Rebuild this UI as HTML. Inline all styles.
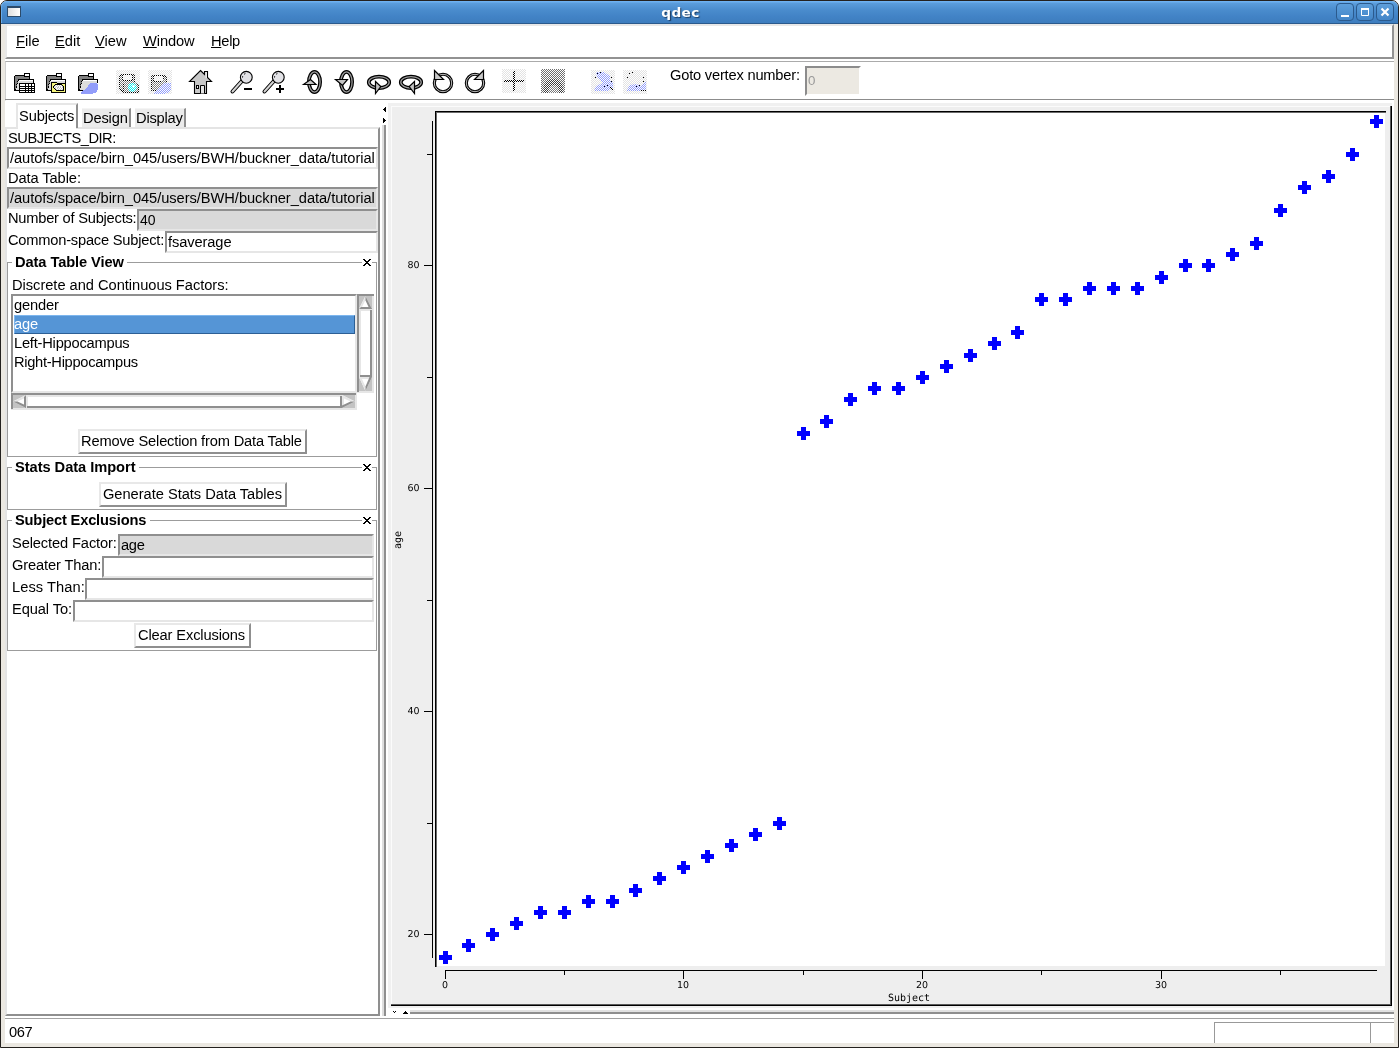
<!DOCTYPE html>
<html><head><meta charset="utf-8"><title>qdec</title>
<style>
*{box-sizing:border-box;margin:0;padding:0}
html,body{width:1399px;height:1048px;overflow:hidden}
body{will-change:transform;position:relative;background:#fff;font-family:"Liberation Sans",sans-serif;font-size:14.67px;color:#000;line-height:17px}
.a{position:absolute}
.t{position:absolute;white-space:nowrap;line-height:17px;height:17px;margin-top:1px}
u{text-decoration:underline;text-underline-offset:1px;text-decoration-thickness:1px}
/* window frame */
#frame{left:0;top:0;width:1399px;height:1048px;border:1px solid #24211e;border-radius:7px 7px 0 0;background:#ebe8e1}
#title{left:1px;top:1px;width:1397px;height:23px;border-radius:6px 6px 0 0;background:linear-gradient(#6eb1f0 0,#6eb1f0 1px,#5b9ddc 2px,#4a8ccd 40%,#4283c6 70%,#3d7dbe 100%);border-bottom:1px solid #2b5a8c;box-shadow:inset 1px 0 0 #68abea}
#title .cap{left:0;top:3px;width:1359px;transform:scaleX(1.14);text-align:center;color:#fff;font-family:'DejaVu Sans',sans-serif;font-weight:bold;font-size:12px;letter-spacing:.3px;line-height:17px;text-shadow:1px 1px 1px #1d3d63}
.wb{top:2px;width:18px;height:18px;border:1px solid #2b5a8d;border-radius:4px;background:linear-gradient(#5d9edb,#4486c8)}
#wmenu{left:6px;top:5px;width:14px;height:11px;border:1px solid #2c4b6b;border-top:2px solid #2c4b6b;background:linear-gradient(90deg,#dedede,#fff)}
#content{left:5px;top:24px;width:1389px;height:1019px;background:#fff}
/* menubar */
#menubar{left:5px;top:24px;width:1389px;height:35px;background:#fff;border-top:2px solid #e8e8e8;border-left:2px solid #e8e8e8;border-right:2px solid #929292;border-bottom:2px solid #929292}
#toolbar{left:5px;top:61px;width:1389px;height:40px;background:#fff;border-top:1px solid #ababab;border-left:1px solid #d0d0d0;border-bottom:1px solid #fff}
#tbline{left:5px;top:99px;width:1389px;height:1px;background:#8c8c8c}
.ic{position:absolute;top:70px;width:24px;height:24px}
/* entry */
.entry{position:absolute;height:22px;border:2px solid;border-color:#8f8f8f #e6e6e6 #e6e6e6 #8f8f8f;background:#fff}
.entry.ro{background:#d9d9d9}
/* notebook */
#nb{left:5px;top:127px;width:375px;height:889px;border:2px solid;border-color:#e4e4e4 #8f8f8f #8f8f8f #e4e4e4;background:#fff}
.tab{position:absolute;background:#ebebeb;border-right:2px solid #8f8f8f;border-top:1px solid #f4f4f4}
#tab1{left:16px;top:103px;width:62px;height:25px;background:#fff;border-left:2px solid #e6e6e6;border-top:2px solid #e6e6e6;border-right:2px solid #8f8f8f}
/* label frames */
.lf{position:absolute;left:7px;width:370px;border:1px solid #9c9c9c;border-top:none}
.lfline{position:absolute;height:1px;background:#9c9c9c}
.lft{font-weight:bold}
.btn{position:absolute;height:25px;border:2px solid;border-color:#e8e8e8 #8f8f8f #8f8f8f #e8e8e8;background:#fff;text-align:center;line-height:19px;white-space:nowrap}
.sb{position:absolute;background:#fff}

</style></head>
<body>
<div id="frame" class="a"></div>
<div id="title" class="a">
  <div id="wmenu" class="a"></div>
  <div class="t cap" id="cap">qdec</div>
  <div class="a wb" style="left:1335px"><svg width="16" height="16" viewBox="0 0 16 16" class="a" style="left:0;top:0"><rect x="4" y="11" width="8" height="2" fill="#fff"/></svg></div>
  <div class="a wb" style="left:1355px"><svg width="16" height="16" viewBox="0 0 16 16" class="a" style="left:0;top:0"><path d="M4.5 5.5h7v6h-7z" fill="none" stroke="#fff" stroke-width="1"/><rect x="4" y="4" width="8" height="2" fill="#fff"/></svg></div>
  <div class="a wb" style="left:1375px"><svg width="16" height="16" viewBox="0 0 16 16" class="a" style="left:0;top:0"><path d="M4.5 4.5l7 7M11.5 4.5l-7 7" stroke="#fff" stroke-width="2.2" fill="none"/></svg></div>
</div>
<div id="content" class="a"></div>

<!-- menubar -->
<div id="menubar" class="a"></div>
<div class="t" id="m1" style="left:16px;top:32px"><u>F</u>ile</div>
<div class="t" id="m2" style="left:55px;top:32px"><u>E</u>dit</div>
<div class="t" id="m3" style="left:95px;top:32px"><u>V</u>iew</div>
<div class="t" id="m4" style="letter-spacing:-0.1px;left:143px;top:32px"><u>W</u>indow</div>
<div class="t" id="m5" style="letter-spacing:-0.3px;left:211px;top:32px"><u>H</u>elp</div>

<!-- toolbar -->
<div id="toolbar" class="a"></div>
<div id="tbline" class="a"></div>
<svg class="a" id="icons" style="left:0;top:62px" width="700" height="38" viewBox="0 62 700 38">
<defs>
  <pattern id="chk" width="2" height="2" patternUnits="userSpaceOnUse"><rect x="0" y="0" width="1" height="1" fill="#fff"/><rect x="1" y="1" width="1" height="1" fill="#fff"/></pattern>
  <g id="folder" shape-rendering="crispEdges"><rect x="10" y="0" width="6" height="1" fill="#000"/><rect x="10" y="1" width="1" height="1" fill="#000"/><rect x="11" y="1" width="4" height="1" fill="#fff"/><rect x="15" y="1" width="1" height="1" fill="#000"/><rect x="1" y="2" width="10" height="1" fill="#000"/><rect x="11" y="2" width="4" height="1" fill="#fff"/><rect x="15" y="2" width="1" height="1" fill="#000"/><rect x="0" y="3" width="1" height="1" fill="#000"/><rect x="1" y="3" width="9" height="1" fill="#808080"/><rect x="10" y="3" width="6" height="1" fill="#000"/><rect x="0" y="4" width="1" height="1" fill="#000"/><rect x="1" y="4" width="14" height="1" fill="#808080"/><rect x="15" y="4" width="1" height="1" fill="#000"/><rect x="0" y="5" width="1" height="1" fill="#000"/><rect x="1" y="5" width="14" height="1" fill="#808080"/><rect x="15" y="5" width="1" height="1" fill="#000"/><rect x="0" y="6" width="1" height="1" fill="#000"/><rect x="1" y="6" width="3" height="1" fill="#808080"/><rect x="4" y="6" width="16" height="1" fill="#000"/><rect x="0" y="7" width="1" height="1" fill="#000"/><rect x="1" y="7" width="3" height="1" fill="#808080"/><rect x="4" y="7" width="1" height="1" fill="#000"/><rect x="5" y="7" width="14" height="1" fill="#fff"/><rect x="19" y="7" width="1" height="1" fill="#000"/><rect x="0" y="8" width="1" height="1" fill="#000"/><rect x="1" y="8" width="2" height="1" fill="#808080"/><rect x="3" y="8" width="1" height="1" fill="#000"/><rect x="4" y="8" width="15" height="1" fill="#dcdcdc"/><rect x="19" y="8" width="1" height="1" fill="#000"/><rect x="0" y="9" width="1" height="1" fill="#000"/><rect x="1" y="9" width="3" height="1" fill="#808080"/><rect x="4" y="9" width="15" height="1" fill="#dcdcdc"/><rect x="19" y="9" width="1" height="1" fill="#000"/><rect x="0" y="10" width="1" height="1" fill="#000"/><rect x="1" y="10" width="2" height="1" fill="#808080"/><rect x="3" y="10" width="1" height="1" fill="#000"/><rect x="4" y="10" width="14" height="1" fill="#dcdcdc"/><rect x="18" y="10" width="1" height="1" fill="#000"/><rect x="0" y="11" width="1" height="1" fill="#000"/><rect x="1" y="11" width="1" height="1" fill="#808080"/><rect x="2" y="11" width="1" height="1" fill="#000"/><rect x="3" y="11" width="15" height="1" fill="#dcdcdc"/><rect x="18" y="11" width="1" height="1" fill="#000"/><rect x="0" y="12" width="1" height="1" fill="#000"/><rect x="1" y="12" width="2" height="1" fill="#808080"/><rect x="3" y="12" width="15" height="1" fill="#dcdcdc"/><rect x="0" y="13" width="1" height="1" fill="#000"/><rect x="1" y="13" width="1" height="1" fill="#808080"/><rect x="2" y="13" width="1" height="1" fill="#000"/><rect x="3" y="13" width="14" height="1" fill="#dcdcdc"/><rect x="17" y="13" width="1" height="1" fill="#000"/><rect x="0" y="14" width="1" height="1" fill="#000"/><rect x="1" y="14" width="1" height="1" fill="#808080"/><rect x="2" y="14" width="1" height="1" fill="#000"/><rect x="3" y="14" width="14" height="1" fill="#dcdcdc"/><rect x="17" y="14" width="1" height="1" fill="#000"/><rect x="0" y="15" width="1" height="1" fill="#000"/><rect x="1" y="15" width="1" height="1" fill="#808080"/><rect x="2" y="15" width="15" height="1" fill="#dcdcdc"/><rect x="0" y="16" width="2" height="1" fill="#000"/><rect x="2" y="16" width="15" height="1" fill="#dcdcdc"/><rect x="17" y="16" width="1" height="1" fill="#000"/><rect x="0" y="17" width="18" height="1" fill="#000"/></g>
</defs>
<!-- 1: folder + table -->
<g transform="translate(14,73)"><use href="#folder"/>
  <g shape-rendering="crispEdges"><rect x="5" y="10" width="16" height="10" fill="#000"/>
  <g fill="#fff"><rect x="6" y="11" width="5" height="2"/><rect x="12" y="11" width="2" height="2"/><rect x="15" y="11" width="2" height="2"/><rect x="18" y="11" width="2" height="2"/>
  <rect x="6" y="14" width="5" height="1"/><rect x="12" y="14" width="2" height="1"/><rect x="15" y="14" width="2" height="1"/><rect x="18" y="14" width="2" height="1"/>
  <rect x="6" y="16" width="5" height="1"/><rect x="12" y="16" width="2" height="1"/><rect x="15" y="16" width="2" height="1"/><rect x="18" y="16" width="2" height="1"/>
  <rect x="6" y="18" width="5" height="1"/><rect x="12" y="18" width="2" height="1"/><rect x="15" y="18" width="2" height="1"/><rect x="18" y="18" width="2" height="1"/></g></g>
</g>
<!-- 2: folder + yellow folder -->
<g transform="translate(46,73)" shape-rendering="crispEdges"><use href="#folder"/><rect x="5" y="9" width="6" height="1" fill="#000"/><rect x="5" y="10" width="1" height="1" fill="#000"/><rect x="6" y="10" width="5" height="1" fill="#f4f47c"/><rect x="11" y="10" width="9" height="1" fill="#000"/><rect x="5" y="11" width="1" height="1" fill="#000"/><rect x="6" y="11" width="3" height="1" fill="#f4f47c"/><rect x="9" y="11" width="7" height="1" fill="#000"/><rect x="16" y="11" width="3" height="1" fill="#f4f47c"/><rect x="19" y="11" width="1" height="1" fill="#000"/><rect x="5" y="12" width="1" height="1" fill="#000"/><rect x="6" y="12" width="2" height="1" fill="#f4f47c"/><rect x="8" y="12" width="1" height="1" fill="#000"/><rect x="9" y="12" width="1" height="1" fill="#c8c8c8"/><rect x="10" y="12" width="1" height="1" fill="#fff"/><rect x="11" y="12" width="1" height="1" fill="#c8c8c8"/><rect x="12" y="12" width="1" height="1" fill="#fff"/><rect x="13" y="12" width="1" height="1" fill="#c8c8c8"/><rect x="14" y="12" width="1" height="1" fill="#fff"/><rect x="15" y="12" width="1" height="1" fill="#c8c8c8"/><rect x="16" y="12" width="1" height="1" fill="#000"/><rect x="17" y="12" width="2" height="1" fill="#f4f47c"/><rect x="19" y="12" width="1" height="1" fill="#000"/><rect x="5" y="13" width="1" height="1" fill="#000"/><rect x="6" y="13" width="1" height="1" fill="#f4f47c"/><rect x="7" y="13" width="1" height="1" fill="#000"/><rect x="8" y="13" width="1" height="1" fill="#c8c8c8"/><rect x="9" y="13" width="1" height="1" fill="#fff"/><rect x="10" y="13" width="1" height="1" fill="#c8c8c8"/><rect x="11" y="13" width="1" height="1" fill="#fff"/><rect x="12" y="13" width="1" height="1" fill="#c8c8c8"/><rect x="13" y="13" width="1" height="1" fill="#fff"/><rect x="14" y="13" width="1" height="1" fill="#c8c8c8"/><rect x="15" y="13" width="1" height="1" fill="#fff"/><rect x="16" y="13" width="1" height="1" fill="#c8c8c8"/><rect x="17" y="13" width="1" height="1" fill="#000"/><rect x="18" y="13" width="1" height="1" fill="#f4f47c"/><rect x="19" y="13" width="1" height="1" fill="#000"/><rect x="5" y="14" width="1" height="1" fill="#000"/><rect x="6" y="14" width="1" height="1" fill="#f4f47c"/><rect x="7" y="14" width="1" height="1" fill="#000"/><rect x="8" y="14" width="1" height="1" fill="#fff"/><rect x="9" y="14" width="1" height="1" fill="#c8c8c8"/><rect x="10" y="14" width="1" height="1" fill="#fff"/><rect x="11" y="14" width="2" height="1" fill="#c8c8c8"/><rect x="13" y="14" width="1" height="1" fill="#fff"/><rect x="14" y="14" width="1" height="1" fill="#c8c8c8"/><rect x="15" y="14" width="1" height="1" fill="#fff"/><rect x="16" y="14" width="1" height="1" fill="#c8c8c8"/><rect x="17" y="14" width="1" height="1" fill="#000"/><rect x="18" y="14" width="1" height="1" fill="#f4f47c"/><rect x="19" y="14" width="1" height="1" fill="#000"/><rect x="5" y="15" width="1" height="1" fill="#000"/><rect x="6" y="15" width="2" height="1" fill="#f4f47c"/><rect x="8" y="15" width="1" height="1" fill="#000"/><rect x="9" y="15" width="1" height="1" fill="#c8c8c8"/><rect x="10" y="15" width="1" height="1" fill="#fff"/><rect x="11" y="15" width="1" height="1" fill="#c8c8c8"/><rect x="12" y="15" width="1" height="1" fill="#fff"/><rect x="13" y="15" width="1" height="1" fill="#c8c8c8"/><rect x="14" y="15" width="1" height="1" fill="#fff"/><rect x="15" y="15" width="1" height="1" fill="#c8c8c8"/><rect x="16" y="15" width="1" height="1" fill="#fff"/><rect x="17" y="15" width="1" height="1" fill="#000"/><rect x="18" y="15" width="1" height="1" fill="#f4f47c"/><rect x="19" y="15" width="1" height="1" fill="#000"/><rect x="5" y="16" width="1" height="1" fill="#000"/><rect x="6" y="16" width="3" height="1" fill="#f4f47c"/><rect x="9" y="16" width="1" height="1" fill="#000"/><rect x="10" y="16" width="1" height="1" fill="#c8c8c8"/><rect x="11" y="16" width="1" height="1" fill="#fff"/><rect x="12" y="16" width="1" height="1" fill="#c8c8c8"/><rect x="13" y="16" width="1" height="1" fill="#fff"/><rect x="14" y="16" width="1" height="1" fill="#c8c8c8"/><rect x="15" y="16" width="1" height="1" fill="#fff"/><rect x="16" y="16" width="1" height="1" fill="#c8c8c8"/><rect x="17" y="16" width="1" height="1" fill="#000"/><rect x="18" y="16" width="1" height="1" fill="#f4f47c"/><rect x="19" y="16" width="1" height="1" fill="#000"/><rect x="5" y="17" width="1" height="1" fill="#000"/><rect x="6" y="17" width="4" height="1" fill="#f4f47c"/><rect x="10" y="17" width="8" height="1" fill="#000"/><rect x="18" y="17" width="1" height="1" fill="#f4f47c"/><rect x="19" y="17" width="1" height="1" fill="#000"/><rect x="5" y="18" width="1" height="1" fill="#000"/><rect x="6" y="18" width="13" height="1" fill="#f4f47c"/><rect x="19" y="18" width="1" height="1" fill="#000"/><rect x="5" y="19" width="15" height="1" fill="#000"/></g>
<!-- 3: folder + blob -->
<g transform="translate(78,73)" shape-rendering="crispEdges"><use href="#folder"/><rect x="12" y="10" width="7" height="1" fill="#929dfa"/><rect x="11" y="11" width="9" height="1" fill="#929dfa"/><rect x="10" y="12" width="10" height="1" fill="#929dfa"/><rect x="10" y="13" width="10" height="1" fill="#929dfa"/><rect x="9" y="14" width="11" height="1" fill="#929dfa"/><rect x="8" y="15" width="12" height="1" fill="#929dfa"/><rect x="7" y="16" width="13" height="1" fill="#929dfa"/><rect x="5" y="17" width="14" height="1" fill="#929dfa"/><rect x="4" y="18" width="15" height="1" fill="#929dfa"/><rect x="3" y="19" width="15" height="1" fill="#929dfa"/><rect x="3" y="20" width="12" height="1" fill="#929dfa"/></g>
<!-- 4: disabled save + ball -->
<g>
  <rect x="116" y="70" width="24" height="24" fill="#e2e2e2"/>
  <path d="M121.500 74.500H133.500L134.500 75.500V82.500L138.500 85.500V92.500H123.500L119.500 88.500V76.500Z" fill="#808080" stroke="#000" stroke-width="1"/>
  <path d="M123.500 83.500V91.500" stroke="#000" stroke-width="1"/>
  <rect x="122.500" y="74.500" width="10" height="6" fill="#ececec" stroke="#000" stroke-width="1"/>
  <circle cx="132.300" cy="87.300" r="4.400" fill="#00f2f2"/><circle cx="133.500" cy="86.300" r="1.300" fill="#fff"/>
  <rect x="116" y="70" width="24" height="24" fill="url(#chk)" shape-rendering="crispEdges"/>
</g>
<!-- 5: disabled save + blob -->
<g>
  <rect x="148" y="70" width="24" height="24" fill="#e2e2e2"/>
  <path d="M152.500 75.500H164.500L166.500 77.500V84.500L156.500 90.500H151.500V76.500Z" fill="#808080" stroke="#000" stroke-width="1"/>
  <path d="M153.500 75.500H163.500V79.500L161.500 81.500H153.500Z" fill="#ececec" stroke="#000" stroke-width="1"/>
  <g transform="translate(151,73)" shape-rendering="crispEdges"><rect x="12" y="10" width="7" height="1" fill="#929dfa"/><rect x="11" y="11" width="9" height="1" fill="#929dfa"/><rect x="10" y="12" width="10" height="1" fill="#929dfa"/><rect x="10" y="13" width="10" height="1" fill="#929dfa"/><rect x="9" y="14" width="11" height="1" fill="#929dfa"/><rect x="8" y="15" width="12" height="1" fill="#929dfa"/><rect x="7" y="16" width="13" height="1" fill="#929dfa"/><rect x="5" y="17" width="14" height="1" fill="#929dfa"/><rect x="4" y="18" width="15" height="1" fill="#929dfa"/><rect x="3" y="19" width="15" height="1" fill="#929dfa"/><rect x="3" y="20" width="12" height="1" fill="#929dfa"/></g>
  <rect x="168" y="83" width="3" height="8" fill="#929dfa"/>
  <rect x="148" y="70" width="24" height="24" fill="url(#chk)" shape-rendering="crispEdges"/>
</g>
<!-- 6: home -->
<g>
  <path d="M200.500 70.500L204.500 74.500V71.500H207.500V77.500L211.500 81.500H206.500V93.500H194.500V81.500H189.500Z" fill="#c8c8c8" stroke="#000" stroke-width="1.100" stroke-linejoin="miter"/>
  <rect x="205.500" y="72" width="1.500" height="6" fill="#e4e4e4"/>
  <rect x="196.500" y="85.500" width="2" height="3" fill="#e4e4e4" stroke="#000" stroke-width="1"/>
  <path d="M200.500 93.500v-8h4v8" fill="#e4e4e4" stroke="#000" stroke-width="1"/>
</g>
<!-- 7: zoom out -->
<g id="mag">
  <path d="M241.500 81.500L232.500 91.500" stroke="#000" stroke-width="4" stroke-linecap="round"/>
  <path d="M241.500 81.500L232.500 91.500" stroke="#d4d4d4" stroke-width="2" stroke-linecap="round"/>
  <circle cx="246.300" cy="77.300" r="5.900" fill="#e2e2e6" stroke="#000" stroke-width="1.100"/>
  <path d="M242.500 77.500a4 4 0 0 1 3.500-4" stroke="#000" stroke-width="1" fill="none" stroke-dasharray="1.500 2"/>
</g>
<rect x="244" y="88" width="8" height="2" fill="#000" shape-rendering="crispEdges"/>
<!-- 8: zoom in -->
<use href="#mag" x="32"/>
<rect x="276" y="88" width="8" height="2" fill="#000" shape-rendering="crispEdges"/><rect x="279" y="85" width="2" height="8" fill="#000" shape-rendering="crispEdges"/>
<!-- 9,10: rotate about vertical ring -->
<g>
  <ellipse cx="314.500" cy="82" rx="5.600" ry="10.100" fill="none" stroke="#000" stroke-width="3.800"/>
  <ellipse cx="314.500" cy="82" rx="5.600" ry="10.100" fill="none" stroke="#9a9a9a" stroke-width="1.300"/>
  <path d="M303.500 84.500L310.500 79.500L316 84.500Z" fill="#c4c4c4" stroke="#000" stroke-width="1.200"/>
</g>
<g>
  <ellipse cx="346.500" cy="82" rx="5.600" ry="10.100" fill="none" stroke="#000" stroke-width="3.800"/>
  <ellipse cx="346.500" cy="82" rx="5.600" ry="10.100" fill="none" stroke="#9a9a9a" stroke-width="1.300"/>
  <path d="M335.500 79.500L347.500 79.500L342.500 85.500Z" fill="#c4c4c4" stroke="#000" stroke-width="1.200"/>
</g>
<!-- 11,12: horizontal ring -->
<g>
  <ellipse cx="379" cy="82.300" rx="10.200" ry="5.700" fill="none" stroke="#000" stroke-width="3.800"/>
  <ellipse cx="379" cy="82.300" rx="10.200" ry="5.700" fill="none" stroke="#9a9a9a" stroke-width="1.300"/>
  <path d="M375.500 81.500L380.800 86.600L375.500 93.500Z" fill="#c4c4c4" stroke="#000" stroke-width="1.200"/>
</g>
<g>
  <ellipse cx="411" cy="82.300" rx="10.200" ry="5.700" fill="none" stroke="#000" stroke-width="3.800"/>
  <ellipse cx="411" cy="82.300" rx="10.200" ry="5.700" fill="none" stroke="#9a9a9a" stroke-width="1.300"/>
  <path d="M414.500 81.500L409.200 86.600L414.500 93.500Z" fill="#c4c4c4" stroke="#000" stroke-width="1.200"/>
</g>
<!-- 13,14: circles -->
<g>
  <circle cx="443" cy="83" r="8.700" fill="none" stroke="#000" stroke-width="3.100"/>
  <circle cx="443" cy="83" r="8.700" fill="none" stroke="#cfcfcf" stroke-width=".900"/>
  <path d="M434.500 70.500V79.500H443.500Z" fill="#c8c8c8" stroke="#000" stroke-width="1.200"/>
</g>
<g>
  <circle cx="475" cy="83" r="8.700" fill="none" stroke="#000" stroke-width="3.100"/>
  <circle cx="475" cy="83" r="8.700" fill="none" stroke="#cfcfcf" stroke-width=".900"/>
  <path d="M483.500 70.500V79.500H474.500Z" fill="#c8c8c8" stroke="#000" stroke-width="1.200"/>
</g>
<!-- 15: crosshair disabled -->
<g shape-rendering="crispEdges">
  <rect x="502" y="69" width="24" height="24" fill="#e2e2e2"/>
  <rect x="504" y="80" width="20" height="2" fill="#000"/><rect x="513" y="71" width="2" height="20" fill="#000"/>
  <rect x="502" y="69" width="24" height="24" fill="url(#chk)"/>
</g>
<!-- 16: gray disabled -->
<g>
  <rect x="541" y="69" width="24" height="24" fill="#6e6e6e"/>
  <path d="M544 93c-2-8 2-14 9-14s11 6 10 14z" fill="#3c3c3c"/>
  <path d="M548 93c0-5 2-8 6-8s5 3 5 8z" fill="#7a7a7a"/>
  <rect x="541" y="69" width="24" height="24" fill="url(#chk)" shape-rendering="crispEdges"/>
</g>
<!-- 17 -->
<g>
  <rect x="591" y="70" width="24" height="24" fill="#e2e2e2"/>
  <path d="M596 72h8l6 4v5l3 1v6l-5 3h-14l2-5 7-3-6-6z" fill="#929dfa"/>
  <path d="M608 88l4 4M610 87l3 3M608 90l3 3" stroke="#000" stroke-width="1"/>
  <rect x="591" y="70" width="24" height="24" fill="url(#chk)" shape-rendering="crispEdges"/>
  <g fill="#000" shape-rendering="crispEdges"><rect x="597" y="73" width="1" height="1"/><rect x="600" y="72" width="1" height="1"/><rect x="595" y="77" width="1" height="1"/><rect x="611" y="77" width="1" height="1"/><rect x="611" y="81" width="1" height="1"/><rect x="604" y="86" width="1" height="1"/><rect x="607" y="85" width="1" height="1"/></g>
</g>
<!-- 18 -->
<g>
  <rect x="623" y="70" width="24" height="24" fill="#e2e2e2"/>
  <path d="M626 91l4-6 6-1 5 2 5-5v8l-3 2z" fill="#929dfa"/>
  <path d="M641 90l1 1 1-1 1 1 1-1 1 1" stroke="#000" stroke-width="1" fill="none"/>
  <rect x="623" y="70" width="24" height="24" fill="url(#chk)" shape-rendering="crispEdges"/>
  <g fill="#000" shape-rendering="crispEdges"><rect x="629" y="73" width="1" height="1"/><rect x="632" y="72" width="1" height="1"/><rect x="627" y="77" width="1" height="1"/><rect x="643" y="77" width="1" height="1"/><rect x="643" y="81" width="1" height="1"/><rect x="636" y="86" width="1" height="1"/><rect x="639" y="85" width="1" height="1"/></g>
</g>
</svg>

<div class="t" id="goto" style="letter-spacing:-0.2px;left:670px;top:66px">Goto vertex number:</div>
<div class="a" id="gotoe" style="left:805px;top:66px;width:56px;height:30px;background:#ece9e2;border:2px solid;border-color:#8c8c8c #fff #fff #8c8c8c"></div>
<div class="t" id="goto0" style="left:808px;top:71px;color:#9a9a9a;font-size:13.33px">0</div>

<!-- notebook -->
<div class="tab" id="tab2" style="left:82px;top:108px;width:49px;height:20px"></div>
<div class="tab" id="tab3" style="left:135px;top:108px;width:51px;height:20px"></div>
<div id="nb" class="a"></div>
<div id="tab1" class="a"></div>
<div class="a" style="left:18px;top:127px;width:58px;height:2px;background:#fff"></div>
<div class="t" id="tt1" style="letter-spacing:-0.12px;left:19px;top:107px">Subjects</div>
<div class="t" id="tt2" style="letter-spacing:-0.15px;left:83px;top:109px">Design</div>
<div class="t" id="tt3" style="letter-spacing:-0.2px;left:136px;top:109px">Display</div>

<div class="t" id="l1" style="letter-spacing:-0.48px;left:8px;top:129px">SUBJECTS_DIR:</div>
<div class="entry" style="left:7px;top:147px;width:371px"></div>
<div class="t" id="e1" style="letter-spacing:-0.05px;width:366px;overflow:hidden;left:10px;top:149px">/autofs/space/birn_045/users/BWH/buckner_data/tutorial</div>
<div class="t" id="l2" style="letter-spacing:-0.09px;left:8px;top:169px">Data Table:</div>
<div class="entry ro" style="left:7px;top:187px;width:371px"></div>
<div class="t" id="e2" style="letter-spacing:-0.05px;width:366px;overflow:hidden;left:10px;top:189px">/autofs/space/birn_045/users/BWH/buckner_data/tutorial</div>
<div class="t" id="l3" style="letter-spacing:-0.23px;left:8px;top:209px">Number of Subjects:</div>
<div class="entry ro" style="left:137px;top:209px;width:241px"></div>
<div class="t" id="e3" style="left:140px;top:211px;font-size:14px">40</div>
<div class="t" id="l4" style="letter-spacing:-0.21px;left:8px;top:231px">Common-space Subject:</div>
<div class="entry" style="left:165px;top:231px;width:213px"></div>
<div class="t" id="e4" style="letter-spacing:-0.1px;left:168px;top:233px">fsaverage</div>

<!-- Data Table View frame -->
<div class="lf" style="top:262px;height:195px"></div>
<div class="lfline" style="left:7px;top:262px;width:5px"></div>
<div class="lfline" style="left:127px;top:262px;width:235px"></div>
<div class="lfline" style="left:372px;top:262px;width:5px"></div>
<div class="t lft" id="f1" style="letter-spacing:-0.09px;left:15px;top:253px">Data Table View</div>
<svg class="a" style="left:363px;top:259px" width="8" height="7" viewBox="0 0 8 7" shape-rendering="crispEdges" fill="#000"><rect x="0" y="0" width="2" height="1"/><rect x="6" y="0" width="2" height="1"/><rect x="1" y="1" width="2" height="1"/><rect x="5" y="1" width="2" height="1"/><rect x="2" y="2" width="4" height="1"/><rect x="3" y="3" width="2" height="1"/><rect x="2" y="4" width="4" height="1"/><rect x="1" y="5" width="2" height="1"/><rect x="5" y="5" width="2" height="1"/><rect x="0" y="6" width="2" height="1"/><rect x="6" y="6" width="2" height="1"/></svg>
<div class="t" id="l5" style="letter-spacing:-0.03px;left:12px;top:276px">Discrete and Continuous Factors:</div>
<!-- listbox -->
<div class="a" id="lb" style="left:11px;top:294px;width:346px;height:99px;border:2px solid;border-color:#8f8f8f #e6e6e6 #e6e6e6 #8f8f8f;background:#fff"></div>
<div class="a" id="sel" style="left:14px;top:315px;width:341px;height:19px;background:#5595d6;border:1px solid;border-color:#7db6ee #2c5f95 #2c5f95 #7db6ee"></div>
<div class="t" id="li1" style="letter-spacing:-0.15px;left:14px;top:296px">gender</div>
<div class="t" id="li2" style="letter-spacing:-0.2px;left:14px;top:315px;color:#fff">age</div>
<div class="t" id="li3" style="letter-spacing:-0.22px;left:14px;top:334px">Left-Hippocampus</div>
<div class="t" id="li4" style="letter-spacing:-0.29px;left:14px;top:353px">Right-Hippocampus</div>
<!-- scrollbars -->
<svg class="a" id="vsb" style="left:357px;top:294px" width="17" height="99" viewBox="0 0 17 99">
  <g shape-rendering="crispEdges"><rect x="0" y="0" width="17" height="99" fill="#c3c3c3"/>
  <rect x="15" y="0" width="2" height="99" fill="#e6e6e6"/><rect x="0" y="97" width="17" height="2" fill="#e6e6e6"/>
  <rect x="0" y="0" width="17" height="2" fill="#8f8f8f"/><rect x="0" y="0" width="2" height="98" fill="#8f8f8f"/>
  <rect x="2" y="15" width="13" height="68" fill="#fff"/><rect x="2" y="15" width="13" height="2" fill="#e6e6e6"/><rect x="2" y="15" width="2" height="68" fill="#e6e6e6"/><rect x="13" y="16" width="2" height="67" fill="#8f8f8f"/><rect x="3" y="81" width="12" height="2" fill="#8f8f8f"/></g>
  <polygon points="8.5,2 15,15 2,15" fill="#fff"/><polygon points="8.5,2 2,15 4,15 8.5,6" fill="#e6e6e6"/><polygon points="8.5,2 15,15 12.5,15 8.5,6.500" fill="#8f8f8f"/><polygon points="2,15 15,15 13,13 4,13" fill="#8f8f8f"/>
  <polygon points="2,83 15,83 8.5,97" fill="#fff"/><polygon points="2,83 15,83 13,85 4,85" fill="#e6e6e6"/><polygon points="2,83 4,83 8.5,92.500 8.5,97" fill="#e6e6e6"/><polygon points="15,83 12.500,83 8.500,92.500 8.500,97" fill="#8f8f8f"/>
</svg>
<svg class="a" id="hsb" style="left:11px;top:393px" width="346" height="17" viewBox="0 0 346 17">
  <g shape-rendering="crispEdges"><rect x="0" y="0" width="346" height="17" fill="#c3c3c3"/>
  <rect x="0" y="15" width="346" height="2" fill="#e6e6e6"/><rect x="344" y="0" width="2" height="17" fill="#e6e6e6"/>
  <rect x="0" y="0" width="345" height="2" fill="#8f8f8f"/><rect x="0" y="0" width="2" height="16" fill="#8f8f8f"/>
  <rect x="15" y="2" width="316" height="13" fill="#fff"/><rect x="15" y="2" width="316" height="2" fill="#e6e6e6"/><rect x="15" y="2" width="2" height="13" fill="#e6e6e6"/><rect x="329" y="3" width="2" height="12" fill="#8f8f8f"/><rect x="16" y="13" width="315" height="2" fill="#8f8f8f"/></g>
  <polygon points="2,8.500 15,2 15,15" fill="#fff"/><polygon points="2,8.500 15,2 15,4.500 6.500,8.500" fill="#e6e6e6"/><polygon points="2,8.500 15,15 15,12.500 6.500,8.500" fill="#8f8f8f"/><polygon points="15,2 15,15 13,13 13,4" fill="#8f8f8f"/>
  <polygon points="344,8.500 331,2 331,15" fill="#fff"/><polygon points="331,2 333,4 333,13 331,15" fill="#e6e6e6"/><polygon points="344,8.500 331,2 331,4.500 339.500,8.500" fill="#e6e6e6"/><polygon points="344,8.500 331,15 331,12.500 339.500,8.500" fill="#8f8f8f"/>
</svg>
<div class="btn" id="b1" style="left:78px;top:429px;width:229px"></div>
<div class="t" id="bt1" style="letter-spacing:-0.17px;left:81px;top:432px">Remove Selection from Data Table</div>

<!-- Stats Data Import -->
<div class="lf" style="top:467px;height:43px"></div>
<div class="lfline" style="left:7px;top:467px;width:5px"></div>
<div class="lfline" style="left:139px;top:467px;width:223px"></div>
<div class="lfline" style="left:372px;top:467px;width:5px"></div>
<div class="t lft" id="f2" style="letter-spacing:-0.05px;left:15px;top:458px">Stats Data Import</div>
<svg class="a" style="left:363px;top:464px" width="8" height="7" viewBox="0 0 8 7" shape-rendering="crispEdges" fill="#000"><rect x="0" y="0" width="2" height="1"/><rect x="6" y="0" width="2" height="1"/><rect x="1" y="1" width="2" height="1"/><rect x="5" y="1" width="2" height="1"/><rect x="2" y="2" width="4" height="1"/><rect x="3" y="3" width="2" height="1"/><rect x="2" y="4" width="4" height="1"/><rect x="1" y="5" width="2" height="1"/><rect x="5" y="5" width="2" height="1"/><rect x="0" y="6" width="2" height="1"/><rect x="6" y="6" width="2" height="1"/></svg>
<div class="btn" id="b2" style="left:99px;top:482px;width:188px"></div>
<div class="t" id="bt2" style="letter-spacing:-0.03px;left:103px;top:485px">Generate Stats Data Tables</div>

<!-- Subject Exclusions -->
<div class="lf" style="top:520px;height:131px"></div>
<div class="lfline" style="left:7px;top:520px;width:5px"></div>
<div class="lfline" style="left:150px;top:520px;width:212px"></div>
<div class="lfline" style="left:372px;top:520px;width:5px"></div>
<div class="t lft" id="f3" style="letter-spacing:-0.18px;left:15px;top:511px">Subject Exclusions</div>
<svg class="a" style="left:363px;top:517px" width="8" height="7" viewBox="0 0 8 7" shape-rendering="crispEdges" fill="#000"><rect x="0" y="0" width="2" height="1"/><rect x="6" y="0" width="2" height="1"/><rect x="1" y="1" width="2" height="1"/><rect x="5" y="1" width="2" height="1"/><rect x="2" y="2" width="4" height="1"/><rect x="3" y="3" width="2" height="1"/><rect x="2" y="4" width="4" height="1"/><rect x="1" y="5" width="2" height="1"/><rect x="5" y="5" width="2" height="1"/><rect x="0" y="6" width="2" height="1"/><rect x="6" y="6" width="2" height="1"/></svg>
<div class="t" id="l6" style="letter-spacing:-0.12px;left:12px;top:534px">Selected Factor:</div>
<div class="entry ro" style="left:118px;top:534px;width:256px"></div>
<div class="t" id="e6" style="letter-spacing:-0.3px;left:121px;top:536px">age</div>
<div class="t" id="l7" style="letter-spacing:-0.13px;left:12px;top:556px">Greater Than:</div>
<div class="entry" style="left:102px;top:556px;width:272px"></div>
<div class="t" id="l8" style="letter-spacing:0.06px;left:12px;top:578px">Less Than:</div>
<div class="entry" style="left:85px;top:578px;width:289px"></div>
<div class="t" id="l9" style="letter-spacing:-0.1px;left:12px;top:600px">Equal To:</div>
<div class="entry" style="left:73px;top:600px;width:301px"></div>
<div class="btn" id="b3" style="left:134px;top:623px;width:117px"></div>
<div class="t" id="bt3" style="letter-spacing:-0.13px;left:138px;top:626px">Clear Exclusions</div>

<!-- sash -->
<svg class="a" style="left:382px;top:105px" width="5" height="912" viewBox="0 0 5 912" shape-rendering="crispEdges">
  <polygon points="1,4.5 4,2 4,7" fill="#000"/><polygon points="4,15.5 1,13 1,18" fill="#000"/>
  <rect x="0" y="20" width="2" height="891" fill="#dedede"/><rect x="2" y="20" width="2" height="891" fill="#8f8f8f"/>
</svg>

<!-- graph -->
<div class="a" id="graph" style="left:388px;top:103px;width:1004px;height:903px;background:#eeeeee"></div>
<svg class="a" id="gsvg" style="left:0;top:0" width="1399" height="1048" viewBox="0 0 1399 1048" shape-rendering="crispEdges">
  <!-- widget relief -->
  <rect x="388" y="103" width="1004" height="3" fill="#f0f0f0"/><rect x="388" y="103" width="3" height="903" fill="#f0f0f0"/>
  <rect x="391" y="106" width="999" height="1" fill="#fbfbfb"/><rect x="391" y="106" width="1" height="898" fill="#fbfbfb"/>
  <rect x="1390" y="106" width="1" height="899" fill="#5a5a5a"/><rect x="391" y="1004" width="1000" height="1" fill="#5a5a5a"/><rect x="1391" y="106" width="1" height="900" fill="#000"/><rect x="391" y="1005" width="1001" height="1" fill="#000"/>
  <rect x="388" y="1006" width="1004" height="2" fill="#f0f0f0"/>
  <!-- plot area -->
  <rect x="435" y="111" width="950" height="855" fill="#fff"/>
  <rect x="435" y="111" width="951" height="1" fill="#000"/><rect x="436" y="112" width="950" height="1" fill="#6a6a6a"/><rect x="435" y="111" width="1" height="856" fill="#000"/><rect x="436" y="112" width="1" height="855" fill="#6a6a6a"/>
  <!-- y axis -->
  <rect x="432" y="121" width="1" height="837" fill="#000"/>
  <g fill="#000">
   <rect x="427" y="154" width="5" height="1"/><rect x="424" y="265" width="8" height="1"/><rect x="427" y="377" width="5" height="1"/>
   <rect x="424" y="488" width="8" height="1"/><rect x="427" y="600" width="5" height="1"/><rect x="424" y="711" width="8" height="1"/>
   <rect x="427" y="823" width="5" height="1"/><rect x="424" y="934" width="8" height="1"/>
  </g>
  <!-- x axis -->
  <rect x="445" y="970" width="932" height="1" fill="#000"/>
  <g fill="#000">
   <rect x="445" y="970" width="1" height="9"/><rect x="564" y="970" width="1" height="5"/><rect x="683" y="970" width="1" height="9"/><rect x="803" y="970" width="1" height="5"/>
   <rect x="922" y="970" width="1" height="9"/><rect x="1041" y="970" width="1" height="5"/><rect x="1161" y="970" width="1" height="9"/><rect x="1280" y="970" width="1" height="5"/>
  </g>
  <g fill="#0000ff"><path d="M443 951h5v4h4v5h-4v4h-5v-4h-4v-5h4z"/><path d="M466 939h5v4h4v5h-4v4h-5v-4h-4v-5h4z"/><path d="M490 928h5v4h4v5h-4v4h-5v-4h-4v-5h4z"/><path d="M514 917h5v4h4v5h-4v4h-5v-4h-4v-5h4z"/><path d="M538 906h5v4h4v5h-4v4h-5v-4h-4v-5h4z"/><path d="M562 906h5v4h4v5h-4v4h-5v-4h-4v-5h4z"/><path d="M586 895h5v4h4v5h-4v4h-5v-4h-4v-5h4z"/><path d="M610 895h5v4h4v5h-4v4h-5v-4h-4v-5h4z"/><path d="M633 884h5v4h4v5h-4v4h-5v-4h-4v-5h4z"/><path d="M657 872h5v4h4v5h-4v4h-5v-4h-4v-5h4z"/><path d="M681 861h5v4h4v5h-4v4h-5v-4h-4v-5h4z"/><path d="M705 850h5v4h4v5h-4v4h-5v-4h-4v-5h4z"/><path d="M729 839h5v4h4v5h-4v4h-5v-4h-4v-5h4z"/><path d="M753 828h5v4h4v5h-4v4h-5v-4h-4v-5h4z"/><path d="M777 817h5v4h4v5h-4v4h-5v-4h-4v-5h4z"/><path d="M801 427h5v4h4v5h-4v4h-5v-4h-4v-5h4z"/><path d="M824 415h5v4h4v5h-4v4h-5v-4h-4v-5h4z"/><path d="M848 393h5v4h4v5h-4v4h-5v-4h-4v-5h4z"/><path d="M872 382h5v4h4v5h-4v4h-5v-4h-4v-5h4z"/><path d="M896 382h5v4h4v5h-4v4h-5v-4h-4v-5h4z"/><path d="M920 371h5v4h4v5h-4v4h-5v-4h-4v-5h4z"/><path d="M944 360h5v4h4v5h-4v4h-5v-4h-4v-5h4z"/><path d="M968 349h5v4h4v5h-4v4h-5v-4h-4v-5h4z"/><path d="M992 337h5v4h4v5h-4v4h-5v-4h-4v-5h4z"/><path d="M1015 326h5v4h4v5h-4v4h-5v-4h-4v-5h4z"/><path d="M1039 293h5v4h4v5h-4v4h-5v-4h-4v-5h4z"/><path d="M1063 293h5v4h4v5h-4v4h-5v-4h-4v-5h4z"/><path d="M1087 282h5v4h4v5h-4v4h-5v-4h-4v-5h4z"/><path d="M1111 282h5v4h4v5h-4v4h-5v-4h-4v-5h4z"/><path d="M1135 282h5v4h4v5h-4v4h-5v-4h-4v-5h4z"/><path d="M1159 271h5v4h4v5h-4v4h-5v-4h-4v-5h4z"/><path d="M1183 259h5v4h4v5h-4v4h-5v-4h-4v-5h4z"/><path d="M1206 259h5v4h4v5h-4v4h-5v-4h-4v-5h4z"/><path d="M1230 248h5v4h4v5h-4v4h-5v-4h-4v-5h4z"/><path d="M1254 237h5v4h4v5h-4v4h-5v-4h-4v-5h4z"/><path d="M1278 204h5v4h4v5h-4v4h-5v-4h-4v-5h4z"/><path d="M1302 181h5v4h4v5h-4v4h-5v-4h-4v-5h4z"/><path d="M1326 170h5v4h4v5h-4v4h-5v-4h-4v-5h4z"/><path d="M1350 148h5v4h4v5h-4v4h-5v-4h-4v-5h4z"/><path d="M1374 115h5v4h4v5h-4v4h-5v-4h-4v-5h4z"/></g>
  <g font-family="'DejaVu Sans Mono','Liberation Mono',monospace" font-size="10px" fill="#000" text-rendering="geometricPrecision">
   <g font-family="'DejaVu Sans',sans-serif" font-size="9.5px"><text x="407.5" y="268">80</text><text x="407.5" y="491">60</text><text x="407.5" y="714">40</text><text x="407.5" y="937">20</text>
   <text x="442" y="988">0</text><text x="677" y="988">10</text><text x="916" y="988">20</text><text x="1155" y="988">30</text></g>
   <text x="888" y="1001">Subject</text>
   <text transform="translate(401,549) rotate(-90)">age</text>
  </g>
</svg>
<!-- bottom sash -->
<svg class="a" style="left:388px;top:1008px" width="1006" height="8" viewBox="0 0 1006 8" shape-rendering="crispEdges">
  <g fill="#000"><rect x="5" y="3" width="1" height="1"/><rect x="7" y="3" width="1" height="1"/><rect x="6" y="4" width="1" height="1"/>
  <rect x="17" y="3" width="1" height="1"/><rect x="16" y="4" width="3" height="1"/><rect x="15" y="5" width="5" height="1"/></g>
  <rect x="22" y="2" width="984" height="2" fill="#e2e2e2"/><rect x="22" y="4" width="984" height="2" fill="#8f8f8f"/>
</svg>
<!-- status bar -->
<div class="a" style="left:5px;top:1018px;width:1389px;height:1px;background:#a2a2a2"></div>
<div class="t" id="st" style="letter-spacing:-0.4px;left:9px;top:1023px">067</div>
<div class="a" style="left:1214px;top:1022px;width:180px;height:21px;border-top:1px solid #999;border-left:1px solid #999"></div>
<div class="a" style="left:1370px;top:1022px;width:1px;height:21px;background:#999"></div>

</body></html>
